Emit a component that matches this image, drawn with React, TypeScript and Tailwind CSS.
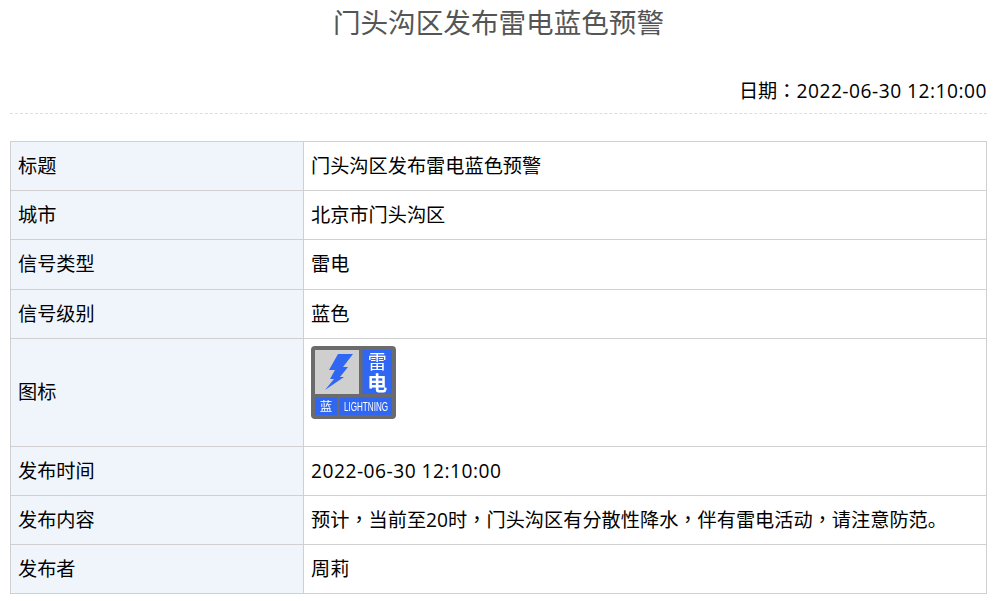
import React from "react";

const font = { fontFamily: '"Open Sans", "Noto Sans CJK SC", sans-serif' };

function LightningIcon() {
  return (
    <svg width="85" height="73" viewBox="0 0 85 73" className="block blur-[0.4px]">
      <rect x="0" y="0" width="85" height="73" rx="4" fill="#6b6b6d" />
      <rect x="4" y="4" width="44" height="44" fill="#cfcfcf" />
      <path d="M27 8 L42 8 L32 21 L37 21 L29 31 L33 31 L14 44 L23 33 L19 33 L24 24 L18 24 Z" fill="#2f66f2" />
      <rect x="51.5" y="4" width="29.5" height="44" fill="#2f66f2" />
      <rect x="4" y="51.5" width="22" height="17.5" fill="#2f66f2" />
      <rect x="29" y="51.5" width="52" height="17.5" fill="#2f66f2" />
      <text x="66.25" y="23" textAnchor="middle" fontSize="19" fill="#fff" fontFamily="Noto Sans CJK SC">雷</text>
      <text x="66.25" y="44.5" textAnchor="middle" fontSize="20" fontWeight="700" fill="#fff" fontFamily="Noto Sans CJK SC">电</text>
      <text x="15" y="65" textAnchor="middle" fontSize="12.5" fill="#fff" fontFamily="Noto Sans CJK SC">蓝</text>
      <text x="55" y="65" textAnchor="middle" fontSize="12" fill="#fff" fontFamily="Liberation Sans" textLength="44" lengthAdjust="spacingAndGlyphs">LIGHTNING</text>
    </svg>
  );
}

// full-width comma / colon sit mid-cell in the reference, the TC cut has them that way
function P({ c }: { c: string }) {
  return <span style={{ fontFamily: '"Noto Sans CJK TC", sans-serif' }}>{c}</span>;
}

const DATE = <span className="tracking-[0.5px]">2022-06-30 12:10:00</span>;

const rows: { label: string; value: React.ReactNode; h: string }[] = [
  { label: "标题", value: "门头沟区发布雷电蓝色预警", h: "h-[49px]" },
  { label: "城市", value: "北京市门头沟区", h: "h-[49px]" },
  { label: "信号类型", value: "雷电", h: "h-[50px]" },
  { label: "信号级别", value: "蓝色", h: "h-[49px]" },
  { label: "图标", value: <LightningIcon />, h: "h-[108px]" },
  { label: "发布时间", value: DATE, h: "h-[49px]" },
  {
    label: "发布内容",
    value: (
      <>
        预计<P c="，" />当前至20时<P c="，" />门头沟区有分散性降水<P c="，" />伴有雷电活动<P c="，" />请注意防范。
      </>
    ),
    h: "h-[49px]",
  },
  { label: "发布者", value: "周莉", h: "h-[49px]" },
];

export default function App() {
  return (
    <div className="w-[996px] h-[601px] overflow-hidden bg-white text-black pl-[10px] pr-[9px]" style={font}>
      {/* Title */}
      <h1 className="h-[46px] text-center text-[27.6px] leading-[45px] font-normal text-[#555]">
        门头沟区发布雷电蓝色预警
      </h1>

      {/* Date */}
      <div className="mt-[22px] h-[46px] border-b border-dashed border-[#ddd] text-right text-[19.2px] leading-[44px]">
        日期<P c="：" />{DATE}
      </div>

      {/* Detail table */}
      <table className="mt-[27px] w-full table-fixed border-collapse text-[19.2px]">
        <colgroup>
          <col className="w-[293px]" />
          <col />
        </colgroup>
        <tbody>
          {rows.map((r) => (
            <tr key={r.label} className={r.h}>
              <td className="border border-[#d0d0d0] bg-[#f0f5fc] px-[7px] align-middle">{r.label}</td>
              <td className="border border-[#d0d0d0] px-[7px] align-middle">
                {r.label === "图标" ? <div className="pb-[23px] pt-[3px]">{r.value}</div> : r.value}
              </td>
            </tr>
          ))}
        </tbody>
      </table>
    </div>
  );
}
